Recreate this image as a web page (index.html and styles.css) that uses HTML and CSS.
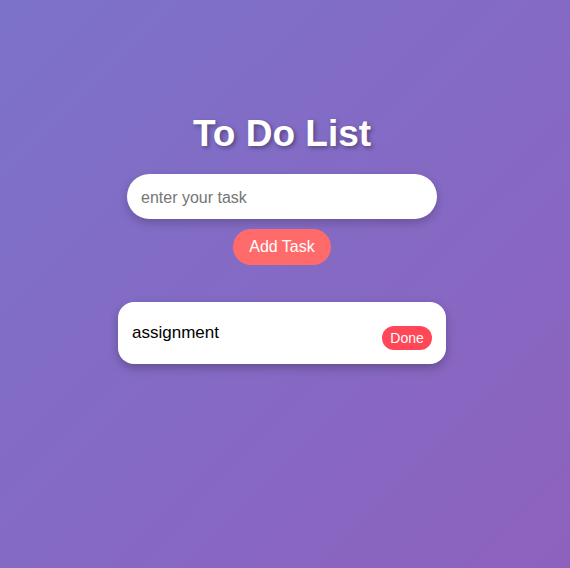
FILE: index.html
```html
<!DOCTYPE html>
<html>
<head>
<meta charset="utf-8">
<link rel="stylesheet" href="styles.css">
</head>
<body>
<div class="app">
  <h1 class="title">To Do List</h1>
  <input class="task-input" type="text" placeholder="enter your task">
  <button class="add-btn">Add Task</button>
  <ul class="list">
    <li class="item">
      <span class="item-text">assignment</span>
      <button class="done-btn">Done</button>
    </li>
  </ul>
</div>
</body>
</html>
```
FILE: styles.css
```css
html, body {
  margin: 0;
  height: 100%;
}
body {
  background: linear-gradient(135deg, #7c72ca 0%, #8d62be 100%);
  font-family: "Liberation Sans", Arial, sans-serif;
}
.app {
  display: flex;
  flex-direction: column;
  align-items: center;
  padding-top: 112px;
  padding-right: 6px;
}
.title {
  margin: 0;
  font-size: 37px;
  font-weight: bold;
  color: #fff;
  line-height: 44px;
  text-shadow: 2px 2px 4px rgba(0,0,0,0.35);
}
.task-input {
  margin-top: 18px;
  width: 310px;
  height: 45px;
  box-sizing: border-box;
  border: none;
  border-radius: 23px;
  padding: 2px 14px 0;
  font-family: "Liberation Sans", Arial, sans-serif;
  font-size: 16px;
  outline: none;
  box-shadow: 0 4px 10px rgba(0,0,0,0.2);
}
.task-input::placeholder {
  color: #757575;
}
.add-btn {
  margin-top: 10px;
  width: 98px;
  height: 36px;
  border: none;
  border-radius: 18px;
  background: #ff6b6b;
  color: #fff;
  font-family: "Liberation Sans", Arial, sans-serif;
  font-size: 16px;
  padding: 0;
}
.list {
  list-style: none;
  margin: 37px 0 0;
  padding: 0;
}
.item {
  width: 328px;
  height: 62px;
  box-sizing: border-box;
  background: #fff;
  border-radius: 16px;
  box-shadow: 0 4px 10px rgba(0,0,0,0.25);
  display: flex;
  justify-content: space-between;
  align-items: flex-start;
  padding: 21px 14px 0 14px;
}
.item-text {
  font-size: 17px;
  color: #000;
  line-height: 20px;
}
.done-btn {
  margin-top: 3px;
  width: 50px;
  height: 24px;
  border: none;
  border-radius: 12px;
  background: #ff4757;
  color: #fff;
  font-family: "Liberation Sans", Arial, sans-serif;
  font-size: 14px;
  padding: 0;
}
```
